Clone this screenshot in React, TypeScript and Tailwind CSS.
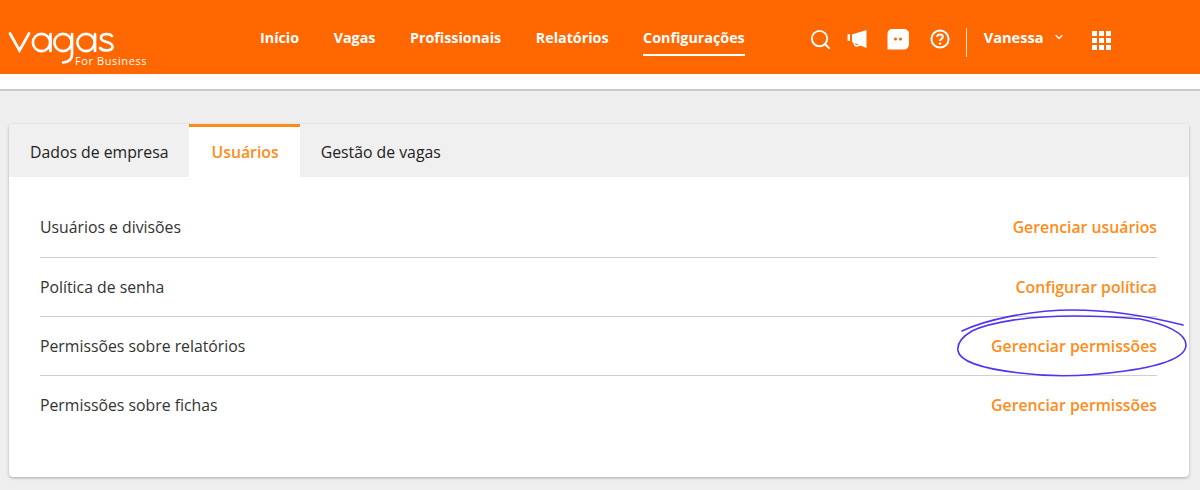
import { ChevronDown, Search } from 'lucide-react';

const navItems = ['Início', 'Vagas', 'Profissionais', 'Relatórios', 'Configurações'];

const rows = [
  { label: 'Usuários e divisões', action: 'Gerenciar usuários' },
  { label: 'Política de senha', action: 'Configurar política' },
  { label: 'Permissões sobre relatórios', action: 'Gerenciar permissões' },
  { label: 'Permissões sobre fichas', action: 'Gerenciar permissões' },
];

function Logo() {
  return (
    <div className="relative h-[74px] w-[160px] shrink-0">
      <svg className="absolute left-0 top-0" width="120" height="74" viewBox="0 0 120 74" fill="none" stroke="#fff" strokeWidth="2.7" strokeLinecap="round" aria-hidden>
        <path d="M10 33.5 L19.5 50.5 L29 33.5" />
        <circle cx="41.5" cy="42.5" r="8.6" />
        <path d="M50.5 34 V51" />
        <circle cx="63" cy="42.5" r="8.6" />
        <path d="M72 34 V54 C72 59 69 62 63 62.5" />
        <circle cx="86" cy="42.5" r="8.6" />
        <path d="M95 34 V51" />
        <path d="M112 36 C110 33.5 101 33 101 38 C101 43 112.5 41 112.5 46.5 C112.5 51.5 103 51.5 100 48" />
      </svg>
      <span className="absolute left-[75px] top-[54px] text-[11px] leading-[14px] tracking-[0.6px] text-white">For Business</span>
    </div>
  );
}

function Megaphone() {
  return (
    <svg width="20" height="19" viewBox="0 0 20 19" fill="#fff" className="block" aria-hidden>
      <path d="M0.5 4.5 L3 4 V11 L0.5 10.5 Z" />
      <path d="M5 4.5 L19.5 0 V18 L5 12 Z" />
      <path d="M6 12 L7 15 C7.5 16.5 9 17 11 16.5 L13.5 15.6 L13 14.4 L10 15 C9 15.2 8.5 14.8 8.2 14 L7.8 12.5 Z" />
    </svg>
  );
}

function ChatBubble() {
  return (
    <svg width="22" height="21" viewBox="0 0 22 21" className="block" aria-hidden>
      <path fill="#fff" d="M5 0 H17 C20 0 22 2 22 5 V15 C22 18 20 20.5 17 20.5 H0.5 V5 C0.5 2 2 0 5 0 Z" />
      <circle cx="8.5" cy="10" r="1.6" fill="#ff6700" />
      <circle cx="13.5" cy="10" r="1.6" fill="#ff6700" />
    </svg>
  );
}

function HelpIcon() {
  return (
    <svg width="20" height="20" viewBox="0 0 20 20" fill="none" stroke="#fff" strokeWidth="2" className="block" aria-hidden>
      <circle cx="10" cy="10" r="8.6" />
      <path d="M7.2 8 C7.2 4.8 12.8 4.8 12.8 8 C12.8 10 10 10 10 12" strokeWidth="2" />
      <circle cx="10" cy="14.6" r="1.2" fill="#fff" stroke="none" />
    </svg>
  );
}

function Grid() {
  return (
    <div className="grid grid-cols-3 gap-[2px]">
      {Array.from({ length: 9 }).map((_, i) => (
        <span key={i} className="h-[5px] w-[5px] bg-white" />
      ))}
    </div>
  );
}

function Header() {
  return (
    <header className="flex h-[74px] items-center bg-[#ff6700] font-['Open_Sans',sans-serif] text-white">
      <Logo />
      <nav className="ml-[100px] flex h-full items-start gap-[34.6px]">
        {navItems.map((item, i) => (
          <a key={item} className="relative pt-[1px] text-[14.3px] font-bold leading-[74px]">
            {item}
            {i === 4 && <span className="absolute bottom-[19px] left-0 h-[2px] w-full bg-white" />}
          </a>
        ))}
      </nav>
      <div className="ml-[64px] mt-[4px] flex items-center">
        <Search size={23} strokeWidth={2} />
        <span className="ml-[15px]"><Megaphone /></span>
        <span className="ml-[20px]"><ChatBubble /></span>
        <span className="ml-[21px]"><HelpIcon /></span>
        <span className="ml-[16px] mt-[6px] h-[29px] w-px bg-white/80" />
        <span className="ml-[17px] -mt-[2px] text-[14.6px] font-bold">Vanessa</span>
        <ChevronDown size={12} strokeWidth={2.5} className="mb-[5px] ml-[9px]" />
        <span className="ml-[27px] mt-[2px]"><Grid /></span>
      </div>
    </header>
  );
}

export default function App() {
  return (
    <div className="relative h-[490px] w-[1200px] overflow-hidden bg-[#efefef] font-['Open_Sans',sans-serif]">
      <Header />
      <div className="h-[17px] border-b-2 border-[#c9c9c9] bg-white" />
      <main className="pl-[9px] pr-[11px] pt-[33px]">
        <section className="h-[353px] overflow-hidden rounded-[4px] bg-white shadow-[0_1px_3px_rgba(0,0,0,0.3)]">
          <div className="flex h-[53px] overflow-hidden bg-[#f0f0f0] text-[15.8px] leading-[57px] text-[#222]">
            <span className="px-[21px]">Dados de empresa</span>
            <span className="border-t-[3px] border-[#ff8c1a] bg-white pl-[22px] pr-[21px] font-semibold leading-[50px] text-[#ff8c1a]">Usuários</span>
            <span className="px-[21px]">Gestão de vagas</span>
          </div>
          <div className="pl-[31px] pr-[32px] pt-[22px]">
            {rows.map((row, i) => (
              <div
                key={row.label + i}
                className={`flex h-[59px] items-center justify-between border-b text-[15.8px] text-[#333] ${i < 3 ? 'border-[#cfcfcf]' : 'border-transparent'} ${i > 0 ? 'pt-[2px]' : ''}`}
              >
                <span>{row.label}</span>
                <a className="font-semibold text-[#ff8c1a]">{row.action}</a>
              </div>
            ))}
          </div>
        </section>
      </main>
      <svg className="absolute left-0 top-0 pointer-events-none" width="1200" height="490" fill="none" stroke="#4f35f0" strokeWidth="1.6" strokeLinecap="round" aria-hidden>
        <path d="M962 331 C985 320 1030 310 1073 310 C1115 310 1155 318 1183 325" />
        <path d="M1140 319 C1110 316 1090 316 1073 316 C1030 316 990 322 972 331 C960 338 957 345 958 351 C960 362 985 369 1020 373 C1050 377 1090 376 1125 371 C1160 366 1186 358 1186 345 C1186 333 1165 324 1140 319" />
      </svg>
    </div>
  );
}
